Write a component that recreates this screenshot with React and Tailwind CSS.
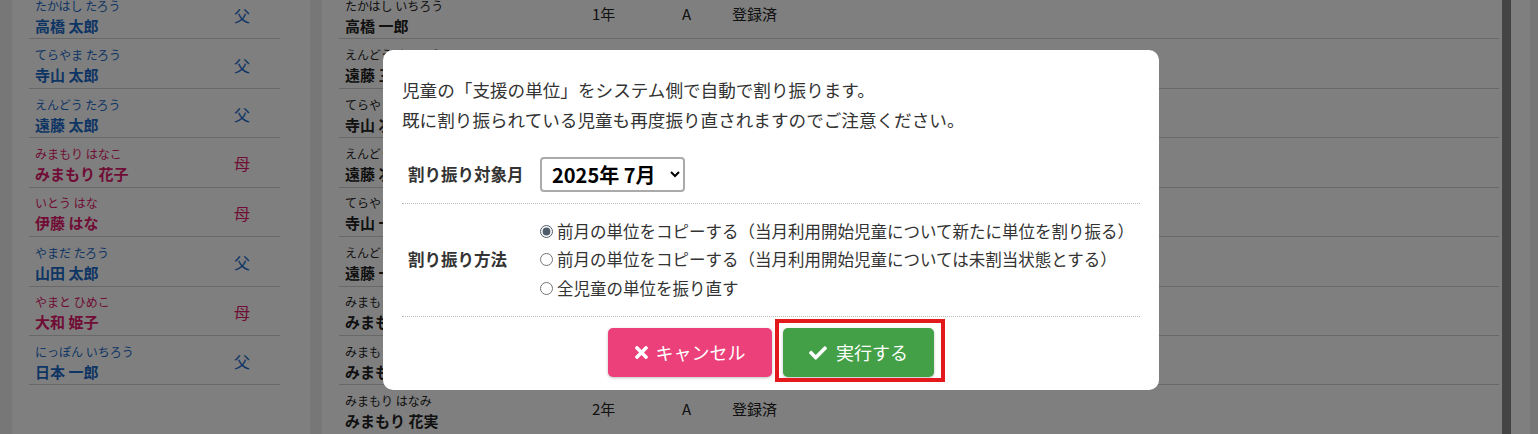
import React from "react";
import { FaTimes, FaCheck } from "react-icons/fa";

const FONT = { fontFamily: '"Noto Sans CJK JP", "Noto Sans", sans-serif' };

const guardians = [
  ["たかはし たろう", "高橋 太郎", "父"],
  ["てらやま たろう", "寺山 太郎", "父"],
  ["えんどう たろう", "遠藤 太郎", "父"],
  ["みまもり はなこ", "みまもり 花子", "母"],
  ["いとう はな", "伊藤 はな", "母"],
  ["やまだ たろう", "山田 太郎", "父"],
  ["やまと ひめこ", "大和 姫子", "母"],
  ["にっぽん いちろう", "日本 一郎", "父"],
];

const children = [
  ["たかはし いちろう", "高橋 一郎", "1年"],
  ["えんどう さぶろう", "遠藤 三郎", "1年"],
  ["てらやま じろう", "寺山 次郎", "1年"],
  ["えんどう じろう", "遠藤 次郎", "1年"],
  ["てらやま いちろう", "寺山 一郎", "2年"],
  ["えんどう いちろう", "遠藤 一郎", "2年"],
  ["みまもり はなこ", "みまもり 花子", "2年"],
  ["みまもり はなよ", "みまもり 花代", "2年"],
  ["みまもり はなみ", "みまもり 花実", "2年"],
];

function GuardianRow({ kana, name, rel }) {
  const mother = rel === "母";
  const color = mother ? "text-[#e0196a]" : "text-[#1b6ac9]";
  return (
    <div className={`h-[49.43px] border-b border-[#d0d0d0] flex items-center justify-between pl-[6px] pr-[30px] ${color}`}>
      <div className="flex flex-col pt-[5px]">
        <span className="text-[12px] leading-[18px]">{kana}</span>
        <span className="text-[15px] leading-[22px] font-bold">{name}</span>
      </div>
      <span className="text-[16px] pt-[2px]">{rel}</span>
    </div>
  );
}

function ChildRow({ kana, name, grade }) {
  return (
    <div className="h-[49.43px] border-b border-[#d0d0d0] flex items-center pl-[6px] text-[#222]">
      <div className="flex flex-col w-[247px] pt-[5px]">
        <span className="text-[12px] leading-[18px]">{kana}</span>
        <span className="text-[15px] leading-[22px] font-bold">{name}</span>
      </div>
      <span className="w-[90px] text-[15px]">{grade}</span>
      <span className="w-[50px] text-[15px]">A</span>
      <span className="text-[15px]">登録済</span>
    </div>
  );
}

function Radio({ checked, children }) {
  return (
    <label className="flex items-center h-[28.5px] text-[16.5px] text-[#333]">
      <input
        type="radio"
        name="method"
        defaultChecked={checked}
        className="m-0 w-[13px] h-[13px] accent-[#4f5d6b]"
      />
      <span className="ml-[4px]">{children}</span>
    </label>
  );
}

export default function App() {
  return (
    <div style={FONT} className="relative w-[1538px] h-[434px] overflow-hidden bg-[#eeeff1]">
      <div className="flex h-full pl-[12px]">
        <div className="w-[298px] bg-white pl-[17px]">
          <div className="-mt-[10px] w-[251px]">
            {guardians.map(([k, n, r]) => (
              <GuardianRow key={n} kana={k} name={n} rel={r} />
            ))}
          </div>
        </div>
        <div className="w-[12px]" />
        <div className="w-[1180px] bg-white pl-[17px] pr-[3px]">
          <div className="-mt-[10px]">
            {children.map(([k, n, g]) => (
              <ChildRow key={n} kana={k} name={n} grade={g} />
            ))}
          </div>
        </div>
        <div className="w-[9px] bg-[#888888]" />
        <div className="w-[19px] bg-white" />
      </div>

      <div className="absolute inset-0 bg-black/50 flex justify-center items-start pt-[50px]">
        <div className="ml-[4px] w-[776px] h-[340px] bg-white rounded-[10px] px-[19px] pt-[25px]">
          <div className="text-[17.6px] leading-[30px] text-[#333]">
            <p>児童の「支援の単位」をシステム側で自動で割り振ります。</p>
            <p>既に割り振られている児童も再度振り直されますのでご注意ください。</p>
          </div>

          <div className="mt-[11px] flex items-center py-[11px] border-b border-dotted border-[#bbb]">
            <div className="w-[138px] pl-[6px] text-[16.5px] font-bold text-[#333]">割り振り対象月</div>
            <select
              defaultValue="2025-07"
              className="w-[145px] h-[35px] border-2 border-[#aaa] rounded-[4px] bg-white pl-[6px] text-[20px] font-bold text-black"
              style={FONT}
            >
              <option value="2025-07">2025年 7月</option>
            </select>
          </div>

          <div className="flex items-center pt-[13px] pb-[13.5px] border-b border-dotted border-[#bbb]">
            <div className="w-[138px] pl-[6px] text-[16.5px] font-bold text-[#333]">割り振り方法</div>
            <div className="flex flex-col">
              <Radio checked>前月の単位をコピーする（当月利用開始児童について新たに単位を割り振る）</Radio>
              <Radio>前月の単位をコピーする（当月利用開始児童については未割当状態とする）</Radio>
              <Radio>全児童の単位を振り直す</Radio>
            </div>
          </div>

          <div className="flex justify-center gap-[11px] pt-[11px]">
            <button className="w-[164px] h-[49px] rounded-[5px] bg-[#ec407a] text-white text-[18px] flex items-center justify-center shadow-[0_1px_3px_rgba(0,0,0,0.25)]">
              <FaTimes className="w-[13px] h-[19px] mr-[8px]" />
              キャンセル
            </button>
            <div className="relative">
              <button className="w-[151px] h-[49px] rounded-[5px] bg-[#43a047] text-white text-[18px] flex items-center justify-center shadow-[0_1px_3px_rgba(0,0,0,0.25)]">
                <FaCheck className="w-[18px] h-[18px] mr-[9px]" />
                実行する
              </button>
              <div className="absolute left-[-8px] right-[-11px] top-[-9px] bottom-[-5px] border-[4px] border-[#e3191c] pointer-events-none" />
            </div>
          </div>
        </div>
      </div>
    </div>
  );
}
